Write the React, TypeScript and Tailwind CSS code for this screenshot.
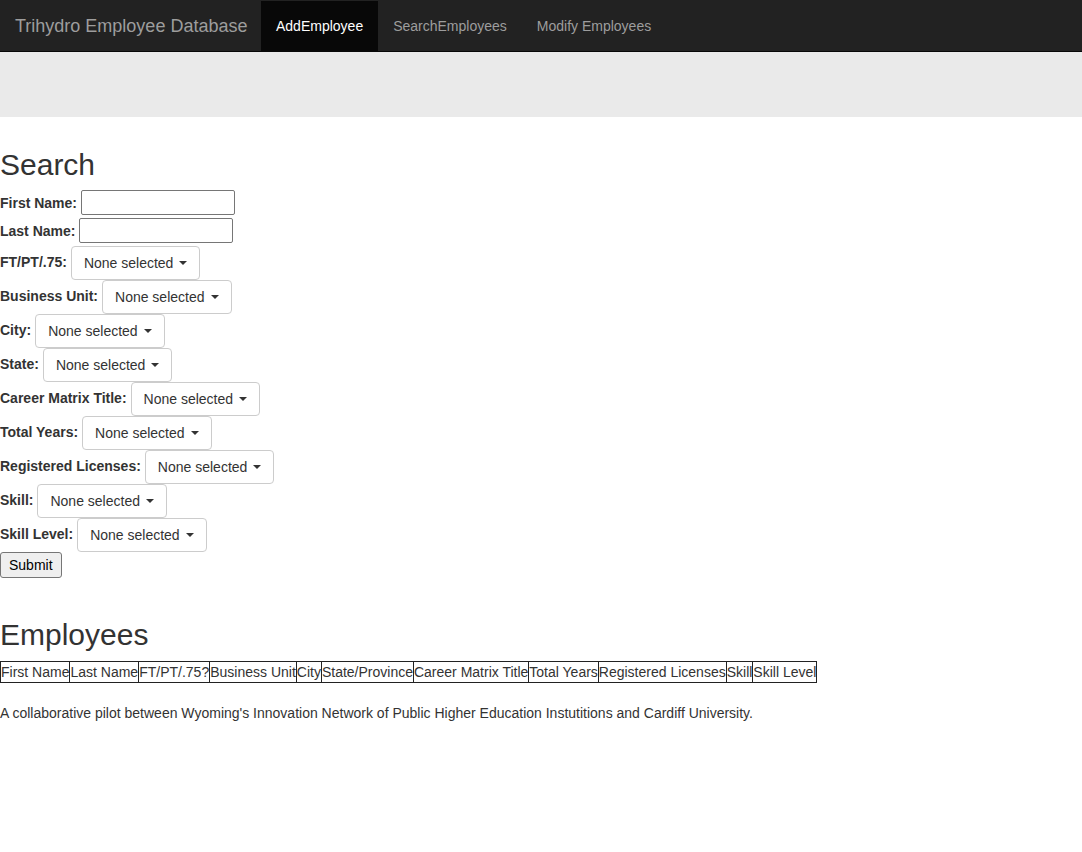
import React from "react";

const font = { fontFamily: '"Liberation Sans", Arial, Helvetica, sans-serif' };

const dropdowns = [
  "FT/PT/.75:",
  "Business Unit:",
  "City:",
  "State:",
  "Career Matrix Title:",
  "Total Years:",
  "Registered Licenses:",
  "Skill:",
  "Skill Level:",
];

const columns = [
  "First Name",
  "Last Name",
  "FT/PT/.75?",
  "Business Unit",
  "City",
  "State/Province",
  "Career Matrix Title",
  "Total Years",
  "Registered Licenses",
  "Skill",
  "Skill Level",
];

function MultiSelect() {
  return (
    <button
      type="button"
      className="flex h-[34px] items-center rounded-[4px] border border-[#ccc] bg-white px-[12px] text-[14px] leading-5 text-[#333]"
    >
      None selected
      <span className="ml-[6px] inline-block h-0 w-0 border-x-[4px] border-t-[4px] border-x-transparent border-t-[#333]" />
    </button>
  );
}

function TextRow({ label }: { label: string }) {
  return (
    <div className="flex h-[28px] items-start gap-[4px]">
      <label className="mt-[3px] text-[14px] font-bold leading-5 text-[#333]">{label}</label>
      <input
        type="text"
        className="h-[25px] w-[154px] rounded-[2px] border border-[#767676] bg-white px-[2px] text-[14px]"
      />
    </div>
  );
}

export default function App() {
  return (
    <div className="min-h-[852px] bg-white text-[14px] leading-5 text-[#333]" style={font}>
      {/* navbar */}
      <nav className="flex h-[52px] border-b border-[#080808] bg-[#222]">
        <a className="flex w-[261px] items-center whitespace-nowrap px-[15px] text-[18px] text-[#9d9d9d]">
          Trihydro Employee Database
        </a>
        <ul className="flex">
          <li className="mt-[1px] flex items-center bg-[#080808] px-[15px] text-white">AddEmployee</li>
          <li className="flex items-center px-[15px] text-[#9d9d9d]">SearchEmployees</li>
          <li className="flex items-center px-[15px] text-[#9d9d9d]">Modify Employees</li>
        </ul>
      </nav>

      {/* jumbotron */}
      <div className="h-[65px] bg-[#eaeaea]" />

      <h1 className="mt-[31px] mb-[9px] text-[30px] leading-[33px] font-medium text-[#333]">Search</h1>

      <form onSubmit={(e) => e.preventDefault()}>
        <TextRow label="First Name:" />
        <TextRow label="Last Name:" />
        {dropdowns.map((d) => (
          <div key={d} className="flex h-[34px] items-center gap-[4px]">
            <label className="mb-[2px] text-[14px] font-bold leading-5">{d}</label>
            <MultiSelect />
          </div>
        ))}
        <button
          type="submit"
          className="h-[26px] rounded-[3px] border border-[#767676] bg-[#efefef] px-[8px] text-[14px] leading-5 text-black"
        >
          Submit
        </button>
      </form>

      <h1 className="mt-[40px] mb-[10px] text-[30px] leading-[33px] font-medium text-[#333]">Employees</h1>

      <table className="border-collapse border border-[#222]">
        <thead>
          <tr>
            {columns.map((c) => (
              <th key={c} className="border border-[#222] p-0 text-[14px] leading-5 font-normal whitespace-nowrap">
                {c}
              </th>
            ))}
          </tr>
        </thead>
      </table>

      <p className="mt-[20px]">
        A collaborative pilot between Wyoming's Innovation Network of Public Higher Education Instutitions and Cardiff University.
      </p>
    </div>
  );
}
